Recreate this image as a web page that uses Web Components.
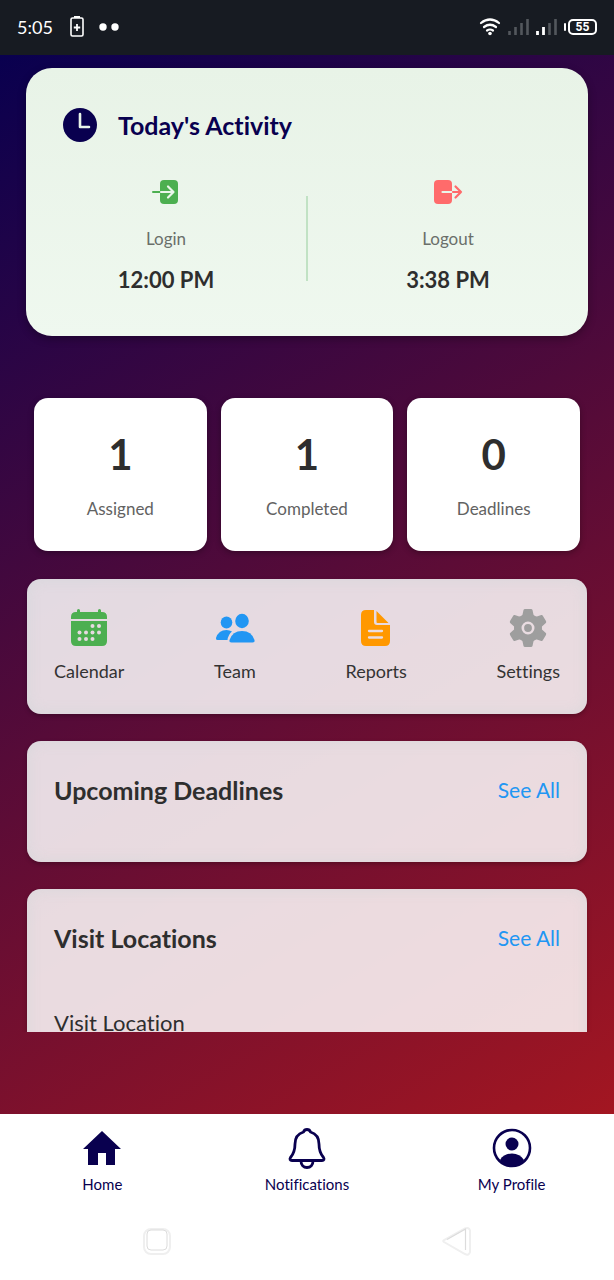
<!DOCTYPE html>
<html lang="en">
<head>
<meta charset="utf-8">
<meta name="viewport" content="width=device-width, initial-scale=1">
<title>Today's Activity</title>
<style>
  html, body { margin: 0; height: 100%; }
  body { font-family: Lato, "Open Sans", sans-serif; font-variant-ligatures: none; color: #2e2e2e; background: #fff; }
</style>
</head>
<body>
<app-shell>
  <status-bar slot="status" time="5:05" battery="55"></status-bar>
  <activity-card heading="Today's Activity">
    <activity-time icon="login" label="Login" time="12:00 PM"></activity-time>
    <activity-time icon="logout" label="Logout" time="3:38 PM"></activity-time>
  </activity-card>
  <stat-row>
    <stat-card value="1" label="Assigned"></stat-card>
    <stat-card value="1" label="Completed"></stat-card>
    <stat-card value="0" label="Deadlines"></stat-card>
  </stat-row>
  <quick-actions>
    <quick-action icon="calendar" label="Calendar"></quick-action>
    <quick-action icon="team" label="Team"></quick-action>
    <quick-action icon="report" label="Reports"></quick-action>
    <quick-action icon="gear" label="Settings"></quick-action>
  </quick-actions>
  <section-card heading="Upcoming Deadlines"></section-card>
  <section-card heading="Visit Locations"><visit-item>Visit Location</visit-item></section-card>
  <tab-bar slot="tabs">
    <tab-item icon="home" label="Home"></tab-item>
    <tab-item icon="bell" label="Notifications"></tab-item>
    <tab-item icon="profile" label="My Profile"></tab-item>
  </tab-bar>
  <system-nav slot="system"></system-nav>
</app-shell>

<script>
const icons = {
  clock: [34, 34, `<circle cx="17" cy="17" r="17" fill="#09004f"/><path d="M17 6v13h9" fill="none" stroke="#e9f4e9" stroke-width="2.6" stroke-linecap="round" stroke-linejoin="round"/>`],
  login: [28, 26, `<rect x="8" y="1" width="18" height="24" rx="4" fill="#4caf50"/><path d="M1 13h8" stroke="#4caf50" stroke-width="2" stroke-linecap="round"/><path d="M9 13h12M16 7.5l5.5 5.5-5.5 5.5" fill="none" stroke="#eaf6ea" stroke-width="2.2" stroke-linecap="round" stroke-linejoin="round"/>`],
  logout: [28, 26, `<rect x="0" y="1" width="18" height="24" rx="4" fill="#ff6b6b"/><path d="M8.5 13H18" stroke="#eaf6ea" stroke-width="2.2" stroke-linecap="round"/><path d="M19 13h8M21.5 7.5L27 13l-5.5 5.5" fill="none" stroke="#ff6b6b" stroke-width="2.2" stroke-linecap="round" stroke-linejoin="round"/>`],
  calendar: [38, 38, `<path d="M1 10V8q0-5 5-5h1V1.5q0-1.5 1.5-1.5T10 1.5V3h18V1.5q0-1.5 1.5-1.5T31 1.500V3h1q5 0 5 5v2z" fill="#4caf50"/><path d="M1 12h36v20q0 5-5 5H6q-5 0-5-5z" fill="#4caf50"/><g fill="#e7dae1"><circle cx="22.5" cy="17" r="2"/><circle cx="29" cy="17" r="2"/><circle cx="9.5" cy="23.5" r="2"/><circle cx="16" cy="23.5" r="2"/><circle cx="22.5" cy="23.5" r="2"/><circle cx="29" cy="23.5" r="2"/><circle cx="9.5" cy="30" r="2"/><circle cx="16" cy="30" r="2"/><circle cx="22.5" cy="30" r="2"/></g>`],
  team: [40, 38, `<g fill="#2196f3"><ellipse cx="11.5" cy="13.5" rx="5.8" ry="6"/><ellipse cx="27" cy="12" rx="6.8" ry="7.2"/><path d="M17 22.5Q14.5 21 11.5 21 3.5 21 1 29q-.5 2 1.5 2h10Q13 26 17 22.5z"/><path d="M27 22q9.5 0 12.5 9 .5 2.5-2 2.5h-21q-2.5 0-2-2.5Q17.5 22 27 22z"/></g>`],
  report: [38, 38, `<path d="M9 1h8v12q0 3 3 3h13v16q0 5-5 5H9q-5 0-5-5V6q0-5 5-5z" fill="#ff9800"/><path d="M19.5 2l12 12h-11q-1 0-1-1z" fill="#ff9800"/><path d="M12 22h13M12 28.5h13" stroke="#eadce1" stroke-width="2.3" stroke-linecap="round"/>`],
  gear: [38, 38, `<g fill="#9e9e9e"><circle cx="19" cy="19" r="14"/><path d="M13 8l1.5-7q.3-1 1.5-1h6q1.2 0 1.5 1L25 8zM13 30l1.5 7q.3 1 1.5 1h6q1.2 0 1.5-1l1.5-7z"/><path transform="rotate(60 19 19)" d="M13 8l1.5-7q.3-1 1.5-1h6q1.2 0 1.5 1L25 8zM13 30l1.5 7q.3 1 1.5 1h6q1.2 0 1.5-1l1.5-7z"/><path transform="rotate(120 19 19)" d="M13 8l1.5-7q.3-1 1.5-1h6q1.2 0 1.5 1L25 8zM13 30l1.5 7q.3 1 1.5 1h6q1.2 0 1.5-1l1.5-7z"/></g><circle cx="19" cy="19" r="5.200" fill="#9e9e9e" stroke="#e9dce1" stroke-width="2.600"/>`],
  home: [40, 40, `<path d="M20 3L1 21h5v16h10V25h8v12h9V21h6z" fill="#09004f"/>`],
  bell: [40, 42, `<path d="M20 2.500c-2 0-3 1-3.500 2.500C10 7 8 11 8 17c0 7-1.500 10-4.500 13.500-1 1.500-.5 3 1.500 3h30c2 0 2.500-1.500 1.500-3C33.500 27 32 24 32 17c0-6-2-10-8.500-12-.500-1.500-1.500-2.500-3.500-2.500zM14 34c0 4 2.500 6.500 6 6.500s6-2.500 6-6.500" fill="none" stroke="#09004f" stroke-width="2.800" stroke-linejoin="round" stroke-linecap="round"/>`],
  profile: [40, 40, `<circle cx="20" cy="20" r="18" fill="none" stroke="#09004f" stroke-width="2.600"/><circle cx="20" cy="16" r="6.500" fill="#09004f"/><path d="M8 32q4-6.500 12-6.500T32 32q-5 6-12 6T8 32z" fill="#09004f"/>`],
  saver: [16, 24, `<rect x="2" y="3" width="12" height="18" rx="1.500" fill="none" stroke="#fff" stroke-width="1.600"/><path d="M5 1h6v2H5z" fill="#fff"/><path d="M8 9v7M4.800 12.500h6.400" stroke="#fff" stroke-width="1.800"/>`],
  dots: [20, 8, `<circle cx="3" cy="4" r="3.700" fill="#fff"/><circle cx="15" cy="4" r="3.700" fill="#fff"/>`],
  wifi: [22, 18, `<g fill="none" stroke="#fff" stroke-width="2.200" stroke-linecap="round"><path d="M2 5q9-7 18 0M5 9q6-4.500 12 0M8 12.500q3-2 6 0"/></g><circle cx="11" cy="15.500" r="1.800" fill="#fff"/>`],
  signal0: [22, 18, `<path d="M2.500 17v-4M8.500 17V9M14.500 17V5M20.500 17V1" stroke="#53575d" stroke-width="2.600"/>`],
  signal2: [22, 18, `<path d="M14.500 17V5M20.500 17V1" stroke="#53575d" stroke-width="2.600"/><path d="M2.500 17v-4M8.500 17V9" stroke="#fff" stroke-width="2.800"/>`],
  recent: [32, 32, `<rect x="3" y="4" width="26" height="25" rx="7" fill="none" stroke="#efefef" stroke-width="2"/><rect x="6" y="5" width="20" height="20" rx="4" fill="#fff" stroke="#dcdcdc" stroke-width="1"/>`],
  back: [32, 32, `<path d="M3 17q-1.500-1 0-2L24 3.500q4-1.500 5 2V27q-1 4-5 2z" fill="#fff" stroke="#efefef" stroke-width="2"/><path d="M6 14.500L24.500 4v21" fill="none" stroke="#dcdcdc" stroke-width="1.200"/>`]
};

function define(name, css, html) {
  customElements.define(name, class extends HTMLElement {
    constructor() {
      super();
      const a = key => (this.getAttribute(key) || "").replace(/[&<"]/g, c => "&#" + c.charCodeAt(0) + ";");
      this.attachShadow({ mode: "open" }).innerHTML = `<style>*{box-sizing:border-box}${css}</style>${html(a)}`;
    }
  });
}

define("app-icon", `:host{display:block;flex:none} svg{display:block;overflow:visible}`, a => {
  const [w, h, body] = icons[a("name")];
  return `<svg width="${w}" height="${h}" viewBox="0 0 ${w} ${h}" aria-hidden="true">${body}</svg>`;
});

define("app-shell", `
  :host{display:flex;flex-direction:column;height:100vh}
  main{flex:1;min-height:0;display:flex;flex-direction:column;padding-bottom:82px;
    background:linear-gradient(150deg,#09004f,#a31621)}
  .scroll{flex:1;min-height:0;overflow-y:auto;scrollbar-width:none;padding-top:13px}`,
  () => `<slot name="status"></slot><main><div class="scroll"><slot></slot></div></main><slot name="tabs"></slot><slot name="system"></slot>`);

define("status-bar", `
  :host{display:flex;align-items:center;height:55px;padding:0 17px 1px;background:#171b22;color:#fff;box-sizing:border-box}
  .time{font-size:18px;line-height:24px;margin-right:16px}
  .left,.right{display:flex;align-items:center}
  .left{flex:1}
  .dots{margin-left:15px}
  .right{gap:6px}
  .battery{display:flex;align-items:center;gap:2px;margin-left:1px}
  .battery::before{content:"";width:2px;height:8px;background:#fff;border-radius:1px}
  .level{width:29px;height:16px;border:2px solid #fff;border-radius:5px;text-align:center;font:bold 12px/12px Roboto,sans-serif}`,
  a => `<div class="left"><span class="time">${a("time")}</span><app-icon name="saver"></app-icon><app-icon class="dots" name="dots"></app-icon></div>
  <div class="right"><app-icon name="wifi"></app-icon><app-icon name="signal0"></app-icon><app-icon name="signal2"></app-icon><div class="battery"><div class="level">${a("battery")}</div></div></div>`);

define("activity-card", `
  :host{display:block;margin:0 26px;height:268px;padding-top:40px;border-radius:26px;box-sizing:border-box;
    background:linear-gradient(#e8f3e7,#eff8ef);box-shadow:0 3px 8px rgba(0,0,0,.3)}
  header{display:flex;align-items:center;gap:21px;padding-left:37px;height:34px}
  h1{margin:0;font-size:25px;line-height:32px;color:#09004f}
  .times{position:relative;display:grid;grid-template-columns:1fr 1fr;gap:2px;margin-top:37px}
  .times::after{content:"";position:absolute;left:50%;top:17px;width:2px;height:85px;margin-left:-1px;background:#c1e2c4}`,
  a => `<header><app-icon name="clock"></app-icon><h1>${a("heading")}</h1></header><div class="times"><slot></slot></div>`);

define("activity-time", `
  :host{display:flex;flex-direction:column;align-items:center}
  .label{margin-top:22px;font-size:17px;line-height:24px;color:#6a6f6a}
  .time{margin-top:13px;font-size:22px;line-height:32px;font-weight:bold}`,
  a => `<app-icon name="${a("icon")}"></app-icon><span class="label">${a("label")}</span><span class="time">${a("time")}</span>`);

define("stat-row", `:host{display:grid;grid-template-columns:repeat(3,1fr);gap:14px;margin:62px 34px 28px}`, () => `<slot></slot>`);

define("stat-card", `
  :host{display:flex;flex-direction:column;align-items:center;height:153px;padding-top:32px;border-radius:14px;
    background:#fff;box-shadow:0 2px 6px rgba(0,0,0,.3);box-sizing:border-box}
  .value{font-size:42px;line-height:48px;font-weight:bold}
  .label{margin-top:19px;font-size:17px;line-height:24px;color:#626262}`,
  a => `<span class="value">${a("value")}</span><span class="label">${a("label")}</span>`);

const panel = `border-radius:14px;background:rgba(255,255,255,.85);
  box-shadow:0 2px 4px rgba(0,0,0,.25),inset 0 0 14px rgba(200,212,212,.45);box-sizing:border-box;`;

define("quick-actions", `:host{display:flex;justify-content:space-between;height:135px;margin:0 27px 27px;padding:30px 27px 0;${panel}}`, () => `<slot></slot>`);

define("quick-action", `
  :host{display:block}
  button{display:flex;flex-direction:column;align-items:center;gap:12px;padding:0;border:0;background:none;color:#333;
    font:inherit;font-variant-ligatures:none;font-size:18px;line-height:24px;cursor:pointer}`,
  a => `<button type="button"><app-icon name="${a("icon")}"></app-icon><span>${a("label")}</span></button>`);

define("section-card", `
  :host{display:block;min-height:121px;margin:0 27px 27px;padding:33px 27px 27px;${panel}}
  header{display:flex;align-items:center;justify-content:space-between}
  h2{margin:0;font-size:25px;line-height:32px}
  a{font-size:21px;line-height:32px;color:#2196f3;text-decoration:none}`,
  a => `<header><h2>${a("heading")}</h2><a href="#all">See All</a></header><slot></slot>`);

define("visit-item", `:host{display:block;margin-top:53px;font-size:22px;line-height:32px}`, () => `<slot></slot>`);

define("tab-bar", `:host{display:grid;grid-template-columns:repeat(3,1fr);height:92px;background:#fff}`, () => `<slot></slot>`);

define("tab-item", `
  :host{display:block}
  a{display:flex;flex-direction:column;align-items:center;padding-top:13px;color:#09004f;text-decoration:none;font-size:15px;line-height:20px}
  .icon{display:flex;align-items:center;height:42px;margin-bottom:5px}`,
  a => `<a href="#${a("icon")}"><span class="icon"><app-icon name="${a("icon")}"></app-icon></span><span>${a("label")}</span></a>`);

define("system-nav", `
  :host{display:flex;justify-content:space-between;align-items:flex-start;height:74px;padding:19px 141px 0;background:#fff;box-sizing:border-box}
  button{padding:0;border:0;background:none}`,
  () => `<button type="button" aria-label="Recent apps"><app-icon name="recent"></app-icon></button><button type="button" aria-label="Back"><app-icon name="back"></app-icon></button>`);
</script>
</body>
</html>
